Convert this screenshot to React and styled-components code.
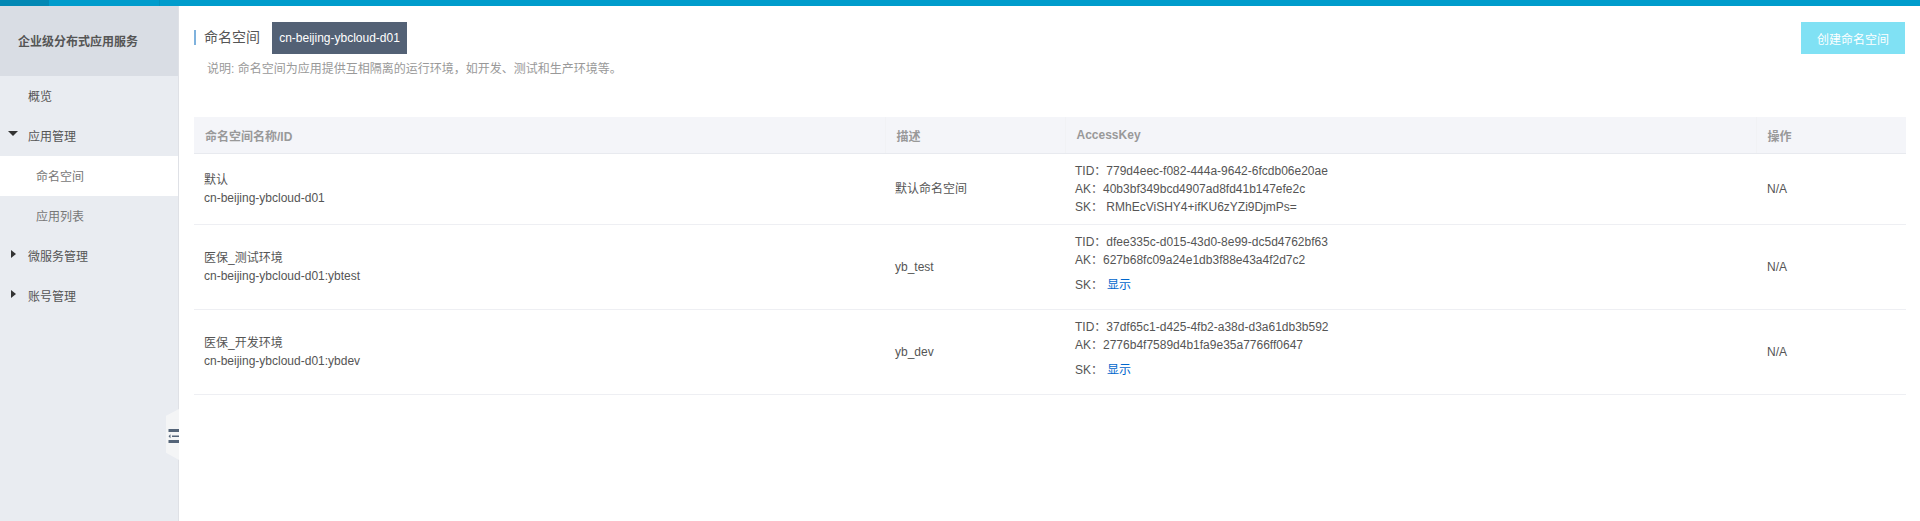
import React from 'react';
import styled, { createGlobalStyle } from 'styled-components';

const GlobalStyle = createGlobalStyle`
  html, body {
    margin: 0;
    padding: 0;
    background: #fff;
    font-family: "Liberation Sans", "Noto Sans CJK SC", sans-serif;
    font-size: 12px;
    color: #555;
  }
`;

const Page = styled.div`
  display: flex;
  flex-direction: column;
  height: 521px;
  overflow: hidden;
`;

const TopBar = styled.div`
  display: flex;
  height: 6px;
  flex: none;
  background: #009ccc;
`;

const TopBarLogo = styled.div`
  width: 49px;
  background: #0288b4;
`;

const TopBarDivider = styled.div`
  width: 1px;
  margin-left: 110px;
  background: #0092c0;
`;

const Body = styled.div`
  display: flex;
  flex: 1;
  min-height: 0;
`;

const Sidebar = styled.aside`
  position: relative;
  flex: none;
  width: 178px;
  background: #e9ecf1;
  border-right: 1px solid #dfe1e6;
`;

const SidebarTitle = styled.div`
  height: 68px;
  padding: 0 0 2px 18px;
  display: flex;
  align-items: center;
  background: #d9dde4;
  font-weight: bold;
  color: #555;
`;

const MenuItem = styled.div`
  position: relative;
  display: flex;
  align-items: center;
  height: 38px;
  padding: 0 0 2px ${(p) => (p.$sub ? '36px' : '28px')};
  background: ${(p) => (p.$active ? '#fff' : 'transparent')};
  color: ${(p) => (p.$sub ? '#777' : '#555')};
`;

const ArrowDown = styled.span`
  position: absolute;
  left: 8px;
  top: 15px;
  border-left: 5px solid transparent;
  border-right: 5px solid transparent;
  border-top: 5px solid #333;
`;

const ArrowRight = styled.span`
  position: absolute;
  left: 11px;
  top: 14px;
  border-top: 4px solid transparent;
  border-bottom: 4px solid transparent;
  border-left: 5px solid #333;
`;

const Collapse = styled.div`
  position: absolute;
  right: -1px;
  top: 403px;
  width: 13px;
  height: 51px;
  background: #f4f5f6;
  clip-path: polygon(100% 0, 100% 100%, 0 86%, 0 13%);
  overflow: hidden;
`;

const CollapseIcon = styled.svg`
  display: block;
  width: 13px;
  height: 51px;
`;

const Main = styled.main`
  flex: 1;
  min-width: 0;
  padding: 16px 14px 0 15px;
`;

const HeaderRow = styled.div`
  display: flex;
  align-items: flex-start;
  justify-content: space-between;
  padding-right: 1px;
`;

const TitleGroup = styled.div`
  display: flex;
  align-items: flex-start;
`;

const Title = styled.h1`
  margin: 8px 0 0;
  padding-left: 8px;
  border-left: 2px solid #7fb2dd;
  height: 15px;
  line-height: 15px;
  font-size: 14px;
  font-weight: normal;
  color: #555;
`;

const RegionTag = styled.div`
  margin-left: 12px;
  height: 32px;
  line-height: 32px;
  width: 135px;
  text-align: center;
  background: #536175;
  color: #fff;
`;

const CreateButton = styled.button`
  width: 104px;
  height: 32px;
  border: 0;
  padding: 0;
  background: #80e1f4;
  color: #fff;
  font: inherit;
`;

const Note = styled.p`
  margin: 6px 0 0 13px;
  line-height: 18px;
  color: #999;
`;

const Table = styled.table`
  width: 100%;
  margin-top: 39px;
  border-collapse: collapse;
  table-layout: fixed;
`;

const Th = styled.th`
  height: 36px;
  padding: 0 0 0 11px;
  text-align: left;
  font-weight: bold;
  color: #999;
  background: #f4f5f9;
  border-bottom: 1px solid #e8eaef;
  & + & {
    border-left: 1px solid #f1f2f5;
  }
`;

const Tr = styled.tr`
  border-bottom: 1px solid #eeeff3;
`;

const Td = styled.td`
  padding: 8px 10px;
  line-height: 18px;
  vertical-align: middle;
  color: #555;
  &:last-child {
    padding-left: 11px;
  }
`;

const KeyLine = styled.div`
  display: flex;
`;

const KeyLabel = styled.span`
  flex: none;
`;

const ShowLine = styled.div`
  line-height: 16px;
  margin: 8px 0;
`;

const ShowLink = styled.a`
  margin-left: 4px;
  color: #0066cc;
  cursor: pointer;
`;

const rows = [
  {
    name: '默认',
    id: 'cn-beijing-ybcloud-d01',
    desc: '默认命名空间',
    tid: '779d4eec-f082-444a-9642-6fcdb06e20ae',
    ak: '40b3bf349bcd4907ad8fd41b147efe2c',
    sk: 'RMhEcViSHY4+ifKU6zYZi9DjmPs=',
  },
  {
    name: '医保_测试环境',
    id: 'cn-beijing-ybcloud-d01:ybtest',
    desc: 'yb_test',
    tid: 'dfee335c-d015-43d0-8e99-dc5d4762bf63',
    ak: '627b68fc09a24e1db3f88e43a4f2d7c2',
  },
  {
    name: '医保_开发环境',
    id: 'cn-beijing-ybcloud-d01:ybdev',
    desc: 'yb_dev',
    tid: '37df65c1-d425-4fb2-a38d-d3a61db3b592',
    ak: '2776b4f7589d4b1fa9e35a7766ff0647',
  },
];

export default function App() {
  return (
    <Page>
      <GlobalStyle />
      <TopBar>
        <TopBarLogo />
        <TopBarDivider />
      </TopBar>
      <Body>
        <Sidebar>
          <SidebarTitle>企业级分布式应用服务</SidebarTitle>
          <MenuItem>概览</MenuItem>
          <MenuItem>
            <ArrowDown />
            应用管理
          </MenuItem>
          <MenuItem $sub $active>命名空间</MenuItem>
          <MenuItem $sub>应用列表</MenuItem>
          <MenuItem>
            <ArrowRight />
            微服务管理
          </MenuItem>
          <MenuItem>
            <ArrowRight />
            账号管理
          </MenuItem>
          <Collapse>
            <CollapseIcon viewBox="0 0 13 51">
              <path d="M2.5 20H13v3H2.5zM2.5 31H13v3H2.5z" fill="#546478" />
              <path d="M6 26.5h7v1.5H6z" fill="#546478" />
              <path d="M2.5 27.2l2-2v4z" fill="#546478" />
            </CollapseIcon>
          </Collapse>
        </Sidebar>
        <Main>
          <HeaderRow>
            <TitleGroup>
              <Title>命名空间</Title>
              <RegionTag>cn-beijing-ybcloud-d01</RegionTag>
            </TitleGroup>
            <CreateButton>创建命名空间</CreateButton>
          </HeaderRow>
          <Note>说明: 命名空间为应用提供互相隔离的运行环境，如开发、测试和生产环境等。</Note>
          <Table>
            <colgroup>
              <col style={{ width: 691 }} />
              <col style={{ width: 180 }} />
              <col style={{ width: 691 }} />
              <col style={{ width: 150 }} />
            </colgroup>
            <thead>
              <tr>
                <Th>命名空间名称/ID</Th>
                <Th>描述</Th>
                <Th>AccessKey</Th>
                <Th>操作</Th>
              </tr>
            </thead>
            <tbody>
              {rows.map((row) => (
                <Tr key={row.id}>
                  <Td>
                    <div>{row.name}</div>
                    <div>{row.id}</div>
                  </Td>
                  <Td>{row.desc}</Td>
                  <Td>
                    <KeyLine><KeyLabel>TID：</KeyLabel>{row.tid}</KeyLine>
                    <KeyLine><KeyLabel>AK：</KeyLabel>{row.ak}</KeyLine>
                    {row.sk ? (
                      <KeyLine><KeyLabel>SK：&nbsp;</KeyLabel>{row.sk}</KeyLine>
                    ) : (
                      <ShowLine>SK：<ShowLink>显示</ShowLink></ShowLine>
                    )}
                  </Td>
                  <Td>N/A</Td>
                </Tr>
              ))}
            </tbody>
          </Table>
        </Main>
      </Body>
    </Page>
  );
}
